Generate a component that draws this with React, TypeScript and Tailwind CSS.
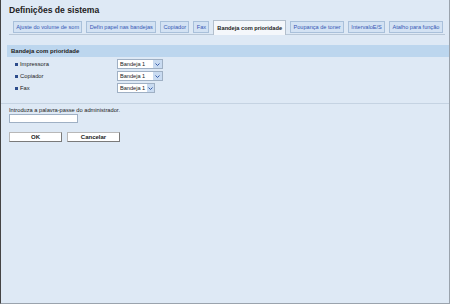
import React from 'react';

const tabs = [
  'Ajuste do volume de som',
  'Defin papel nas bandejas',
  'Copiador',
  'Fax',
  'Bandeja com prioridade',
  'Poupança de toner',
  'IntervaloE/S',
  'Atalho para função',
];

const ACTIVE = 'Bandeja com prioridade';

function TraySelect({ wide }: { wide: boolean }) {
  return (
    <div className={`flex h-[10px] items-stretch overflow-hidden border border-[#9fb0c4] bg-white ${wide ? 'w-[46px]' : 'w-[38px]'}`}>
      <span className="flex-1 whitespace-nowrap pl-[2px] text-[5.6px] leading-[8px] text-[#222]">Bandeja 1</span>
      <span className={`flex shrink-0 items-center justify-center bg-[#c9dbf1] ${wide ? 'w-[9px]' : 'w-[7px]'}`}>
        <svg width="5" height="3" viewBox="0 0 5 3">
          <path d="M0.5 0.5 L2.5 2.5 L4.5 0.5" fill="none" stroke="#3a5ea8" strokeWidth="1" />
        </svg>
      </span>
    </div>
  );
}

export default function App() {
  const rows = [
    { label: 'Impressora', wide: true },
    { label: 'Copiador', wide: true },
    { label: 'Fax', wide: false },
  ];

  return (
    <div
      className="h-[304px] w-[450px] border-b border-l border-r border-b-[#9aa3ad] border-l-[#444] border-r-[#9aa3ad] bg-[#dee9f5] text-[#222]"
      style={{ fontFamily: '"Liberation Sans", Arial, sans-serif' }}
    >
      <h1 className="whitespace-nowrap pl-[8px] pt-[5px] text-[8.6px] font-bold leading-[10px] text-[#222]">Definições de sistema</h1>

      <div className="ml-[8px] mr-[4px] mt-[6px] flex h-[14px] items-end gap-[4px] whitespace-nowrap border-b border-[#b9c8d8] pl-[4px]">
        {tabs.map((t) =>
          t === ACTIVE ? (
            <div
              key={t}
              className="mb-[-1px] flex h-[15px] shrink-0 items-center border border-b-0 border-[#b3bfcc] bg-[#f4f7fb] px-[3px] text-[5.7px] font-bold text-[#222]"
            >
              {t}
            </div>
          ) : (
            <div
              key={t}
              className="mb-[1px] flex h-[12px] shrink-0 items-center border border-[#a9c0da] bg-[#d3e2f3] px-[2.3px] text-[5.6px] text-[#3557b5]"
            >
              {t}
            </div>
          )
        )}
      </div>

      <div className="ml-[6px] mt-[10px] flex h-[12px] items-center whitespace-nowrap bg-[#bcd6ee] pl-[4px] text-[6px] font-bold">
        Bandeja com prioridade
      </div>

      <div className="mt-[1px]">
        {rows.map((r) => (
          <div key={r.label} className="flex h-[12px] items-center">
            <div className="flex w-[116px] items-center pl-[14px]">
              <span className="h-[3px] w-[3px] bg-[#2c4c8c]" />
              <span className="whitespace-nowrap pl-[2px] text-[5.8px] leading-[8px]">{r.label}</span>
            </div>
            <TraySelect wide={r.wide} />
          </div>
        ))}
      </div>

      <div className="mt-[9px] border-t border-[#c5d3e2]" />

      <div className="pl-[8px]">
        <p className="mt-[2px] whitespace-nowrap text-[5.7px] leading-[8px]">Introduza a palavra-passe do administrador.</p>
        <div className="h-[9px] w-[69px] border border-[#9fb0c4] bg-white" />
        <div className="mt-[9px] flex gap-[5px]">
          <button className="flex h-[10px] w-[53px] items-center justify-center border border-[#b8b8b8] border-b-[#7a7a7a] border-r-[#7a7a7a] bg-white text-[6px] font-bold leading-none text-[#222]">
            OK
          </button>
          <button className="flex h-[10px] w-[53px] items-center justify-center border border-[#b8b8b8] border-b-[#7a7a7a] border-r-[#7a7a7a] bg-white text-[6px] font-bold leading-none text-[#222]">
            Cancelar
          </button>
        </div>
      </div>
    </div>
  );
}
